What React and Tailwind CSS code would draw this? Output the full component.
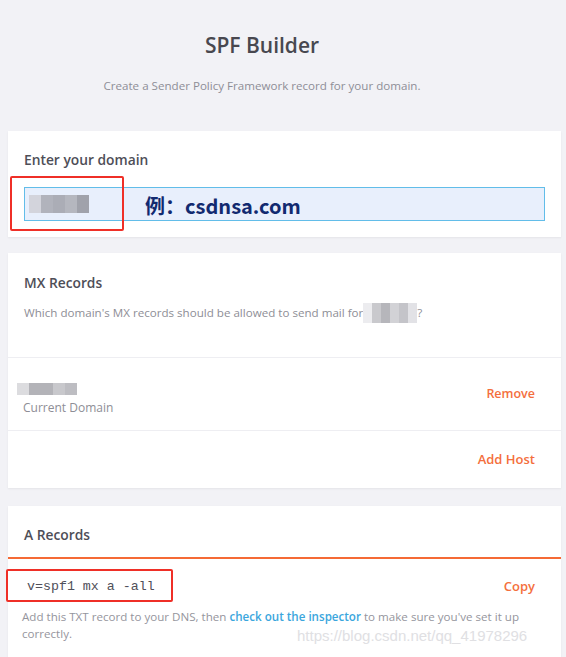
import React from "react";

function Blob({ shades, h = "h-[18px]", w = "w-[12px]" }) {
  return (
    <div className="flex blur-[0.6px]">
      {shades.map((c, i) => (
        <div key={i} className={`${h} ${w}`} style={{ backgroundColor: c }} />
      ))}
    </div>
  );
}

export default function App() {
  return (
    <div className="min-h-[657px] w-[566px] overflow-hidden bg-[#f2f2f6] font-['Open_Sans',sans-serif]">
      {/* Header */}
      <div className="flex flex-col items-center pr-[42px] pt-[30px]">
        <h1 className="text-[21px] leading-[30px] font-semibold text-[#48484f]">SPF Builder</h1>
        <p className="mt-[17px] text-[11.6px] leading-[18px] text-[#8e8e96]">
          Create a Sender Policy Framework record for your domain.
        </p>
      </div>

      {/* Card 1 */}
      <div className="relative mt-[36px] ml-[8px] w-[553px] bg-white px-4 pt-[19px] pb-4 shadow-[0_1px_2px_rgba(0,0,0,0.06)]">
        <div className="text-[13.8px] leading-[20px] font-semibold text-[#4e4e57]">Enter your domain</div>
        <div className="mt-[17px] flex h-[34px] items-center border-[1.5px] border-[#62bde9] bg-[#e8effc] pl-[4px]">
          <Blob shades={["#d3d4dc", "#b1b3bc", "#abadb6", "#b5b7bf", "#a0a2ab"]} />
        </div>
        <div className="absolute left-[137px] top-[62px] font-['Noto_Sans_CJK_SC','Noto_Sans',sans-serif] text-[20px] leading-[26px] font-bold text-[#122a70]">
          例：csdnsa.com
        </div>
        <div className="pointer-events-none absolute left-[2px] top-[45px] h-[55px] w-[114px] rounded-[2px] border-2 border-[#ef2f27]" />
      </div>

      {/* Card 2 */}
      <div className="mt-[16px] ml-[8px] w-[553px] bg-white shadow-[0_1px_2px_rgba(0,0,0,0.06)]">
        <div className="px-4 pt-[20px] pb-[34px]">
          <div className="text-[13.8px] leading-[20px] font-semibold text-[#4e4e57]">MX Records</div>
          <div className="mt-[10px] flex items-center text-[11.6px] leading-[20px] text-[#8e8e96]">
            <span>Which domain's MX records should be allowed to send mail for</span>
            <Blob shades={["#ececef", "#c9c9cd", "#b6b6bb", "#d2d2d6", "#c4c4c9", "#e2e2e6"]} w="w-[9px]" h="h-[20px]" />
            <span>?</span>
          </div>
        </div>
        <div className="flex h-[73px] items-center justify-between border-t border-[#eeeef2] pr-[26px] pl-[9px]">
          <div className="flex flex-col pt-[9px]">
            <div className="pt-[1px]">
              <Blob shades={["#dcdcdf", "#b3b3b8", "#b3b3b8", "#c8c8cc", "#bdbdc2"]} w="w-[12px]" h="h-[12px]" />
            </div>
            <div className="mt-[5px] pl-[6px] text-[12px] leading-[16px] text-[#8e8e96]">Current Domain</div>
          </div>
          <button className="text-[12.5px] font-semibold text-[#f46f3d]">Remove</button>
        </div>
        <div className="flex h-[58px] items-center justify-end border-t border-[#eeeef2] pr-[26px]">
          <button className="text-[13px] font-semibold text-[#f46f3d]">Add Host</button>
        </div>
      </div>

      {/* Card 3 */}
      <div className="mt-[18px] ml-[8px] w-[553px] bg-white shadow-[0_1px_2px_rgba(0,0,0,0.06)]">
        <div className="px-4 pt-[19px] pb-[12px]">
          <div className="text-[13.8px] leading-[20px] font-semibold text-[#4e4e57]">A Records</div>
        </div>
        <div className="relative border-t-2 border-[#f56a35] pb-4">
          <div className="flex h-[56px] items-center justify-between pr-[26px] pl-[19px]">
            <span className="font-['Liberation_Mono',monospace] text-[13.3px] text-[#50505a]">v=spf1 mx a -all</span>
            <button className="text-[13px] font-semibold text-[#f46f3d]">Copy</button>
          </div>
          <p className="-mt-[7px] pr-[28px] pl-[14px] text-[11.6px] leading-[17px] text-[#95959d]">
            Add this TXT record to your DNS, then{" "}
            <span className="font-semibold text-[#3aa6dd]">check out the inspector</span> to make sure you've set it up correctly.
          </p>
          <div className="pointer-events-none absolute left-[-2px] top-[10px] h-[33px] w-[167px] rounded-[2px] border-2 border-[#ef2f27]" />
          <div className="pointer-events-none absolute left-[289px] top-[68px] font-['Liberation_Sans',sans-serif] text-[15px] leading-[18px] text-[#e0e0e3] [text-shadow:1px_1px_0_#fff,-1px_0_0_#fff]">
            https://blog.csdn.net/qq_41978296
          </div>
        </div>
      </div>
    </div>
  );
}
